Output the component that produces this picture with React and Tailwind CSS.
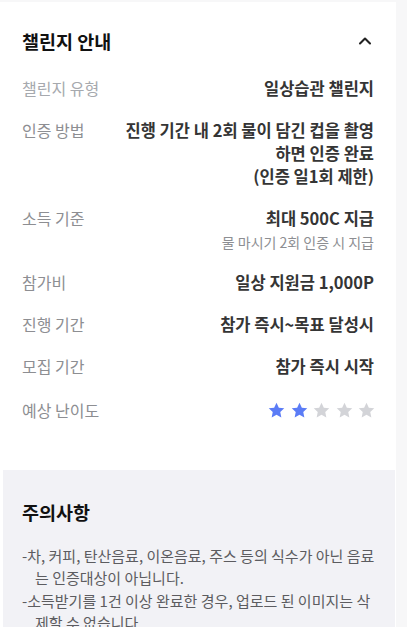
import { ChevronUp } from 'lucide-react';

const rows = [
  { label: '챌린지 유형', value: ['일상습관 챌린지'], light: true },
  { label: '인증 방법', value: ['진행 기간 내 2회 물이 담긴 컵을 촬영', '하면 인증 완료', '(인증 일1회 제한)'] },
  { label: '소득 기준', value: ['최대 500C 지급'], sub: '물 마시기 2회 인증 시 지급' },
  { label: '참가비', value: ['일상 지원금 1,000P'] },
  { label: '진행 기간', value: ['참가 즉시~목표 달성시'] },
  { label: '모집 기간', value: ['참가 즉시 시작'] },
];

// lines split where the screenshot wraps them
const notes = [
  ['차, 커피, 탄산음료, 이온음료, 주스 등의 식수가 아닌 음료', '는 인증대상이 아닙니다.'],
  ['소득받기를 1건 이상 완료한 경우, 업로드 된 이미지는 삭', '제할 수 없습니다.'],
];

function Star({ on }) {
  return (
    <svg width="19" height="19" viewBox="0 0 24 24" className={on ? 'fill-[#5b7cf6]' : 'fill-[#d3d4d8]'}>
      <path d="M12 2.2l2.95 6.3 6.85.8-5.05 4.7 1.35 6.8L12 17.4l-6.1 3.4 1.35-6.8L2.2 9.3l6.85-.8z" />
    </svg>
  );
}

export default function App() {
  return (
    <div
      className="flex min-h-[627px] bg-[#f7f7f8] pt-[2px]"
      style={{ fontFamily: '"Noto Sans CJK KR", "Noto Sans", sans-serif' }}
    >
      <div className="w-[396px] bg-white">
        <div className="px-[22px] pt-[27px] pb-[48px]">
          <div className="flex items-center justify-between">
            <h2 className="text-[18.5px] leading-[24px] font-bold text-[#111]">챌린지 안내</h2>
            <ChevronUp size={20} strokeWidth={2.5} className="text-[#222] mr-[-1px]" />
          </div>

          <div className="mt-[24px] flex flex-col gap-[19px]">
            {rows.map((r) => (
              <div key={r.label} className="flex justify-between gap-3">
                <span className={`text-[16px] leading-[23px] shrink-0 ${r.light ? 'text-[#a6a9ae]' : 'text-[#8d8e92]'}`}>
                  {r.label}
                </span>
                <div className="text-right">
                  {r.value.map((v) => (
                    <p key={v} className="text-[16.5px] leading-[23px] font-semibold text-[#353535] whitespace-nowrap">
                      {v}
                    </p>
                  ))}
                  {r.sub && (
                    <p className="mt-[2px] text-[14px] leading-[20px] text-[#8d8e92]">{r.sub}</p>
                  )}
                </div>
              </div>
            ))}
            <div className="flex items-center justify-between pt-[2px]">
              <span className="text-[16px] leading-[23px] text-[#8d8e92]">예상 난이도</span>
              <div className="flex gap-[3.5px] mr-[-2px]">
                <Star on />
                <Star on />
                <Star />
                <Star />
                <Star />
              </div>
            </div>
          </div>
        </div>

        <div className="ml-[3px] mr-[1px] bg-[#f2f2f6] px-[19px] pt-[30px] pb-[20px]">
          <h2 className="text-[18.5px] leading-[24px] font-bold text-[#111]">주의사항</h2>
          <div className="mt-[21px] flex flex-col gap-[1px]">
            {notes.map(([first, rest]) => (
              <div key={first} className="text-[15px] leading-[22px] text-[#5c5c60] whitespace-nowrap">
                <p>-{first}</p>
                <p className="pl-[13px]">{rest}</p>
              </div>
            ))}
          </div>
        </div>
      </div>
      <div className="flex-1" />
    </div>
  );
}
